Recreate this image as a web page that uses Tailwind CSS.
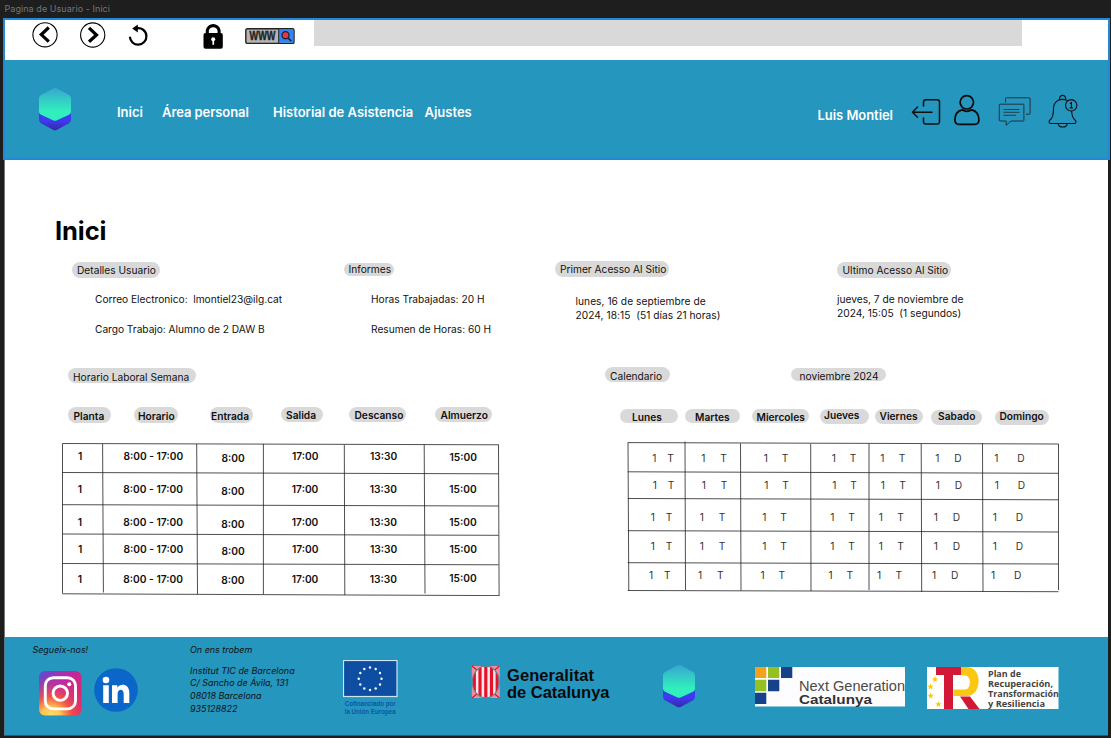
<!DOCTYPE html>
<html lang="es">
<head>
<meta charset="utf-8">
<title>Pagina de Usuario - Inici</title>
<script src="https://cdn.jsdelivr.net/npm/@tailwindcss/browser@4"></script>
</head>
<body class="flex h-[738px] w-[1111px] flex-col overflow-hidden bg-[#1e1e1e] font-['Inter',sans-serif] text-[10.2px] whitespace-nowrap text-[#111]">

<div class="h-[18px] shrink-0 pl-[4.500px] text-[9px] leading-[18px] tracking-[0.060px] text-[#757575]">Pagina de Usuario - Inici</div>

<header class="ml-[3px] flex h-[142px] w-[1107px] shrink-0 flex-col border-2 border-[#2388d6] bg-[#2596be]">
  <!-- browser bar -->
  <div class="flex h-[40px] shrink-0 items-start bg-white">
    <svg class="ml-[27px] mt-[2px] h-[26px] w-[26px]" viewBox="0 0 26 26" fill="none" stroke="#000"><circle cx="13" cy="12.8" r="12.1" stroke-width="1.1"/><path d="M16.8 5.5 9.3 12.6l7.5 7" stroke-width="3.2"/></svg>
    <svg class="ml-[22px] mt-[2px] h-[26px] w-[26px]" viewBox="0 0 26 26" fill="none" stroke="#000"><circle cx="12.7" cy="13" r="12.1" stroke-width="1.1"/><path d="m9 5.8 7.5 7.2L9 19.8" stroke-width="3.2"/></svg>
    <svg class="ml-[22px] mt-[4px] h-[24px] w-[20px]" viewBox="0 0 20 24" fill="none" stroke="#000"><path d="M7.500 4.600C13.500 3 18.400 6.700 18.400 12.200a8.200 8.200 0 0 1-16.500.5" stroke-width="2.200"/><path d="M9.800.6 4.200 4.600l5.600 4z" fill="#000" stroke="none"/></svg>
    <svg class="ml-[55px] mt-[3px] h-[26px] w-[20px]" viewBox="0 0 20 26"><path d="M4.300 13V7.500a6 6 0 0 1 11.800 0V13" fill="none" stroke="#000" stroke-width="3.100"/><rect x=".5" y="10" width="19.300" height="15.700" rx="2" fill="#000"/><circle cx="10.200" cy="16.200" r="2" fill="#fff"/><path d="M9.400 17h1.700v4.800H9.400z" fill="#fff"/></svg>
    <svg class="ml-[22px] mt-[8px] h-[16px] w-[50px]" viewBox="0 0 50 16"><rect x=".8" y=".8" width="48.200" height="14.600" rx="1.500" fill="#b4b4b4" stroke="#222" stroke-width="1.400"/><path d="M34 1.500h14.300v13.200H34z" fill="#2f86f6"/><path d="M33.700 1v14" stroke="#222"/><text x="4.500" y="12.300" font-family="Liberation Sans" font-weight="bold" font-size="12" textLength="26" lengthAdjust="spacingAndGlyphs" fill="#222" stroke="#222" stroke-width=".4">WWW</text><path d="m42.500 9.500 3.800 3.600" stroke="#222" stroke-width="1.700"/><circle cx="40.500" cy="7.200" r="3.500" fill="#ef3150" stroke="#222" stroke-width="1.300"/></svg>
    <div class="ml-[18.500px] h-[26px] w-[708.500px] bg-[#d9d9d9]"></div>
  </div>
  <!-- main navigation -->
  <nav class="flex grow items-start text-[13px] leading-[20px] font-semibold text-white">
    <svg class="ml-[34px] mt-[28px] h-[43px] w-[32px] shrink-0" viewBox="0 0 32 43"><defs><linearGradient id="hexTop" x2="0" y2="1"><stop stop-color="#37a6d0"/><stop offset=".7" stop-color="#30efbd"/></linearGradient><linearGradient id="hexBase" x2="0" y2="1"><stop offset=".6" stop-color="#3d3bf0"/><stop offset="1" stop-color="#3728a8"/></linearGradient></defs><path d="M0 18h32v14q0 2-2 3.200l-12 6.500q-2 1-4 0L2 35.200Q0 34 0 32z" fill="url(#hexBase)"/><path d="M14 .6q2-1 4 0L30 7q2 1.200 2 3.200V24q0 1.500-2 2.700l-12 5.600q-2 1-4 0L2 26.700Q0 25.500 0 24V10.200Q0 8.200 2 7z" fill="url(#hexTop)"/></svg>
    <div class="mt-[42px] grid w-[742px] shrink-0 grid-cols-[45px_111px_151.500px_1fr] pl-[46px]"><a>Inici</a><a class="tracking-[-0.070px]">Área personal</a><a>Historial de Asistencia</a><a>Ajustes</a></div>
    <a class="mt-[45px] ml-[4.500px] w-[93.500px] shrink-0 tracking-[-0.050px]">Luis Montiel</a>
    <svg class="mt-[38px] h-[28px] w-[30px]" viewBox="0 0 30 28" fill="none" stroke="#111" stroke-width="1.500" stroke-linecap="round" stroke-linejoin="round"><path d="M12.500 8V4q0-2.300 2.300-2.300h11.400q2.300 0 2.300 2.300v19.800q0 2.300-2.300 2.300H14.800q-2.300 0-2.300-2.300V20M21 14.300H1.800M6.500 9 1.500 14.300l5 5"/></svg>
    <svg class="ml-[13px] mt-[34px] h-[32px] w-[26px]" viewBox="0 0 26 32" fill="none" stroke="#0b0b0b" stroke-width="1.700"><circle cx="12.800" cy="8.300" r="6.700"/><path d="M8 15.800C3 17 1 20.500.9 26q0 4.300 4 4.300h16q4 0 4-4.300c-.1-5.500-2.100-9-7.100-10.200-3.500 2.200-6.500 2.200-9.800 0Z"/></svg>
    <svg class="ml-[18px] mt-[37px] h-[30px] w-[34px]" viewBox="0 0 34 30" fill="none" stroke="#263238" stroke-width="1"><path d="M7.500 5.500v-4q0-.7.700-.7h23.200q.7 0 .7.700v15q0 .7-.7.700H28M1.700 7.200h23.600q.6 0 .6.600v15.500q0 .7-.7.700H13L8.200 28.300V24H2q-.7 0-.7-.7V8q0-.8.400-.8Z"/><path d="M5.500 12.500h16M5.500 15.300h16M5.500 18.300h12.300" stroke-width=".9"/></svg>
    <svg class="ml-[16px] mt-[34px] h-[34px] w-[30px]" viewBox="0 0 30 34" fill="none" stroke="#111" stroke-width="1.100"><path d="M19.800 6.600C9 2.500 5.500 10 5.500 14.500c0 7-.8 9.500-3.500 11.500-1.500 1.300-1 3.500.5 3.500h24c1.700 0 2-2.200.5-3.500-2.300-2-3.200-5-3.400-9"/><path d="M11.500 5.500c-.3-5.500 6.500-5.500 6.200-.2M10.200 29.800c.6 4.300 8.400 4.300 9 0"/><circle cx="23.200" cy="11.300" r="5.700"/><path d="m21.900 9.800 1.500-1.200v5.200m-1.700.1h3.300"/></svg>
  </nav>
</header>

<main class="ml-[4px] flex h-[477px] w-[1104px] shrink-0 flex-col border-l border-[#777] bg-white">
  <h1 class="mt-[54px] ml-[50px] h-[32px] shrink-0 text-[25.500px] leading-[33px] font-bold tracking-[-0.100px] text-black">Inici</h1>

  <section class="h-[121px] shrink-0 pt-[15px]">
    <div class="flex h-[17px] items-start">
      <span class="ml-[67px] mt-[1px] h-[15.500px] w-[88px] rounded-full bg-[#d9d9d9] pl-[5px] leading-[17px]">Detalles Usuario</span>
      <span class="ml-[184px] mt-[1.500px] h-[13.500px] w-[50px] rounded-full bg-[#d9d9d9] pl-[4.500px] leading-[13px]">Informes</span>
      <span class="ml-[161px] h-[16px] w-[114px] rounded-full bg-[#d9d9d9] pl-[5px] leading-[17px]">Primer Acesso Al Sitio</span>
      <span class="ml-[168px] mt-[1px] h-[15.500px] w-[114px] rounded-full bg-[#d9d9d9] pl-[5.500px] leading-[17px]">Ultimo Acesso Al Sitio</span>
    </div>
    <div class="mt-[13.500px] ml-[90px] grid grid-cols-[276px_204.500px_261.500px_1fr] leading-[14px]">
      <div><p class="tracking-[-0.020px]">Correo Electronico:&nbsp; lmontiel23@ilg.cat</p><p class="mt-[16.500px] tracking-[-0.030px]">Cargo Trabajo: Alumno de 2 DAW B</p></div>
      <div><p>Horas Trabajadas: 20 H</p><p class="mt-[16.500px]">Resumen de Horas: 60 H</p></div>
      <p class="pt-[2px] tracking-[0.040px]">lunes, 16 de septiembre de<br>2024, 18:15&nbsp; (51 días 21 horas)</p>
      <p>jueves, 7 de noviembre de<br>2024, 15:05&nbsp; (1 segundos)</p>
    </div>
  </section>

  <section class="flex items-start">
    <!-- weekly schedule -->
    <div class="w-[600px] shrink-0">
      <h2 class="ml-[63px] mt-[0.500px] h-[15.500px] w-[128px] rounded-full bg-[#d9d9d9] pl-[5px] leading-[18.500px]">Horario Laboral Semana</h2>
      <div class="mt-[24px] flex h-[15.500px] items-start pl-[63px] font-semibold">
        <span class="h-[15.500px] w-[43px] rounded-full bg-[#d9d9d9] pl-[5.500px] leading-[18px]">Planta</span>
        <span class="ml-[22.500px] h-[15.500px] w-[44px] rounded-full bg-[#d9d9d9] pl-[4.500px] leading-[18px]">Horario</span>
        <span class="ml-[32.500px] h-[15.500px] w-[42.500px] rounded-full bg-[#d9d9d9] pl-[1px] leading-[19px]">Entrada</span>
        <span class="ml-[28.500px] h-[15px] w-[42px] rounded-full bg-[#d9d9d9] pl-[5px] leading-[16px]">Salida</span>
        <span class="ml-[26px] h-[15px] w-[57px] rounded-full bg-[#d9d9d9] pl-[5.500px] leading-[16px]">Descanso</span>
        <span class="ml-[29px] h-[15px] w-[57px] rounded-full bg-[#d9d9d9] pl-[5.500px] leading-[16px]">Almuerzo</span>
      </div>
      <div class="relative mt-[20.500px] ml-[57px] h-[153px] w-[438px] leading-[14px] font-semibold">
        <svg class="absolute inset-0 h-[153px] w-[438px]" viewBox="0 0 438 153" fill="none" stroke="#222" stroke-width=".8"><path d="M.5.500 436.500 1.800M.5 29.500l436 1.300M.5 61.700l436 1.300M.5 91l436 1.300M.5 120.500l436 1.300M.5 150.800l437 1.800M.5.500v150M40.600 1l.8 148.500M134.700 1l.8 150M201.400 1v150.500M282.300 2l.5 150M362.200 1.500l.8 149M436.500 1.500l.6 151"/></svg>
        <div class="grid h-[29.500px] grid-cols-[45.500px_98px_70.500px_78px_79.500px_1fr] pt-[6px] pl-[16px]"><span>1</span><span>8:00 - 17:00</span><span class="pt-[1.500px]">8:00</span><span>17:00</span><span>13:30</span><span class="pt-[0.500px]">15:00</span></div>
        <div class="grid h-[32px] grid-cols-[45.500px_98px_70.500px_78px_79.500px_1fr] pt-[9.500px] pl-[15.800px]"><span>1</span><span>8:00 - 17:00</span><span class="pt-[1.500px]">8:00</span><span>17:00</span><span>13:30</span><span>15:00</span></div>
        <div class="grid h-[29.500px] grid-cols-[45.500px_98px_70.500px_78px_79.500px_1fr] pt-[10.500px] pl-[15.800px]"><span>1</span><span>8:00 - 17:00</span><span class="pt-[1.500px]">8:00</span><span>17:00</span><span>13:30</span><span>15:00</span></div>
        <div class="grid h-[29.500px] grid-cols-[45.500px_98px_70.500px_78px_79.500px_1fr] pt-[8px] pl-[16px]"><span>1</span><span>8:00 - 17:00</span><span class="pt-[1.500px]">8:00</span><span>17:00</span><span>13:30</span><span>15:00</span></div>
        <div class="grid h-[30px] grid-cols-[45.500px_98px_70.500px_78px_79.500px_1fr] pt-[8.500px] pl-[15.800px]"><span>1</span><span>8:00 - 17:00</span><span class="pt-[0.500px]">8:00</span><span>17:00</span><span>13:30</span><span class="mt-[-1px]">15:00</span></div>
      </div>
    </div>
    <!-- calendar -->
    <div class="grow">
      <div class="flex h-[15px] items-start">
        <h2 class="h-[15px] w-[64.500px] rounded-full bg-[#d9d9d9] pl-[5px] leading-[18px]">Calendario</h2>
        <span class="mt-[1px] ml-[121.500px] h-[13px] w-[95px] rounded-full bg-[#d9d9d9] pl-[8.500px] leading-[16px]">noviembre 2024</span>
      </div>
      <div class="mt-[26px] flex h-[17px] items-start pl-[15px] font-semibold">
        <span class="mt-[0.500px] h-[14.500px] w-[57.500px] rounded-full bg-[#d9d9d9] pl-[12px] leading-[17px]">Lunes</span>
        <span class="ml-[7.500px] mt-[0.500px] h-[14.500px] w-[54.500px] rounded-full bg-[#d9d9d9] pl-[10px] leading-[16px]">Martes</span>
        <span class="ml-[12px] mt-[0.500px] h-[14.500px] w-[57.500px] rounded-full bg-[#d9d9d9] pl-[5px] leading-[17px]">Miercoles</span>
        <span class="ml-[11px] mt-[0.500px] h-[15px] w-[48.500px] rounded-full bg-[#d9d9d9] pl-[4px] leading-[13px]">Jueves</span>
        <span class="ml-[6.500px] mt-[1px] h-[15px] w-[47.500px] rounded-full bg-[#d9d9d9] pl-[4.500px] leading-[14px]">Viernes</span>
        <span class="ml-[8px] mt-[2px] h-[14.500px] w-[51.500px] rounded-full bg-[#d9d9d9] pl-[7.500px] leading-[13px]">Sabado</span>
        <span class="ml-[12.500px] mt-[2px] h-[15px] w-[54px] rounded-full bg-[#d9d9d9] pl-[5px] leading-[13px]">Domingo</span>
      </div>
      <div class="relative mt-[17px] ml-[22px] h-[150px] w-[433px] leading-[14px] text-[#333]">
        <svg class="absolute inset-0 h-[150px] w-[433px] overflow-visible" viewBox="0 0 433 150" fill="none" stroke="#222" stroke-width=".8"><path d="M.8.600 431.500 2M.8 29.800l430.700 1.500M.8 56.500l430.700 1.300M.8 88.700l430.700 1.300M.8 120.700l430.700 1.300M.8 148.500l430.700 1.200M1 .600l.8 148M58-.5l.5 148.500M113.500 1.500l.5 147M183.700 2l.3 147M242 1.500V148M294.200 2l.5 148M355.500 1l.5 148.500M431.500 2v146"/></svg>
        <div class="grid h-[29.500px] grid-cols-[15px_34px_19px_43.500px_18px_50px_18px_30.500px_18.500px_36.500px_19px_40px_23px_1fr] pt-[8.500px] pl-[25.300px]"><span>1</span><span>T</span><span>1</span><span>T</span><span>1</span><span>T</span><span>1</span><span>T</span><span>1</span><span>T</span><span>1</span><span>D</span><span>1</span><span>D</span></div>
        <div class="grid h-[26.500px] grid-cols-[15px_34px_19px_43.500px_18px_50px_18px_30.500px_18.500px_36.500px_19px_40px_23px_1fr] pt-[6.500px] pl-[25.800px]"><span>1</span><span>T</span><span>1</span><span>T</span><span>1</span><span>T</span><span>1</span><span>T</span><span>1</span><span>T</span><span>1</span><span>D</span><span>1</span><span>D</span></div>
        <div class="grid h-[32px] grid-cols-[15px_34px_19px_43.500px_18px_50px_18px_30.500px_18.500px_36.500px_19px_40px_23px_1fr] pt-[11.500px] pl-[23.800px]"><span>1</span><span>T</span><span>1</span><span>T</span><span>1</span><span>T</span><span>1</span><span>T</span><span>1</span><span>T</span><span>1</span><span>D</span><span>1</span><span>D</span></div>
        <div class="grid h-[32px] grid-cols-[15px_34px_19px_43.500px_18px_50px_18px_30.500px_18.500px_36.500px_19px_40px_23px_1fr] pt-[9px] pl-[23.800px]"><span>1</span><span>T</span><span>1</span><span>T</span><span>1</span><span>T</span><span>1</span><span>T</span><span>1</span><span>T</span><span>1</span><span>D</span><span>1</span><span>D</span></div>
        <div class="grid h-[29px] grid-cols-[15px_34px_19px_43.500px_18px_50px_18px_30.500px_18.500px_36.500px_19px_40px_23px_1fr] pt-[6px] pl-[22px]"><span>1</span><span>T</span><span>1</span><span>T</span><span>1</span><span>T</span><span>1</span><span>T</span><span>1</span><span>T</span><span>1</span><span>D</span><span>1</span><span>D</span></div>
      </div>
    </div>
  </section>
</main>

<footer class="ml-[4px] flex h-[99px] w-[1104px] shrink-0 items-start border-b border-l border-b-[#1b5f78] border-l-[#4d7f92] bg-[#2596be] text-[8.950px] leading-[12.670px] italic">
  <div class="ml-[27.500px] mt-[7px] w-[157.500px] shrink-0">
    <p>Segueix-nos!</p>
    <div class="mt-[11px] flex items-start gap-[12px] pl-[6.500px]">
      <svg class="mt-[3px] h-[45px] w-[43px]" viewBox="0 0 43 45"><defs><linearGradient id="igBase" x1="0" y1="0" x2="1" y2=".6"><stop stop-color="#5450d6"/><stop offset=".45" stop-color="#b02bb0"/><stop offset="1" stop-color="#e2266a"/></linearGradient><radialGradient id="igGlow" cx=".28" cy="1.050" r=".95"><stop stop-color="#ffdf74"/><stop offset=".25" stop-color="#ffc650"/><stop offset=".5" stop-color="#f9593c" stop-opacity=".9"/><stop offset="1" stop-color="#d32b84" stop-opacity="0"/></radialGradient></defs><rect width="42.500" height="44.500" rx="6" fill="url(#igBase)"/><rect width="42.500" height="44.500" rx="6" fill="url(#igGlow)"/><g fill="none" stroke="#fff" stroke-width="2.900"><rect x="6.300" y="6.700" width="30.200" height="31.200" rx="8"/><circle cx="21.300" cy="22.200" r="7.200"/></g><circle cx="30.300" cy="13.300" r="2" fill="#fff"/></svg>
      <svg class="h-[44px] w-[44px]" viewBox="0 0 44 44"><circle cx="22" cy="22" r="21.800" fill="#0a66c8"/><g fill="#fff"><circle cx="12" cy="12" r="3.300"/><path d="M9.200 17.200h5.600V35H9.200zM18 17.200h5.300v2.500c2.500-4.500 12-4.300 12 5V35h-5.600v-9.200c0-5.500-6.100-5-6.100 0V35H18z"/></g></svg>
    </div>
  </div>
  <div class="mt-[7px] w-[153px] shrink-0">
    <p>On ens trobem</p>
    <p class="mt-[8px]">Institut TIC de Barcelona<br>C/ Sancho de Ávila, 131<br>08018 Barcelona<br>935128822</p>
  </div>
  <svg class="mt-[23px] h-[56px] w-[55px] shrink-0 not-italic" viewBox="0 0 55 56"><rect x=".5" y=".5" width="53.500" height="36" fill="#0d4da2" stroke="#cfe6f2" stroke-width="1.200"/><g fill="#fff"><circle cx="27" cy="7.500" r="1.200"/><circle cx="32.700" cy="9" r="1.200"/><circle cx="37" cy="13" r="1.200"/><circle cx="38.500" cy="18.700" r="1.200"/><circle cx="37" cy="24.500" r="1.200"/><circle cx="32.700" cy="28.500" r="1.200"/><circle cx="27" cy="30" r="1.200"/><circle cx="21.300" cy="28.500" r="1.200"/><circle cx="17.300" cy="24.500" r="1.200"/><circle cx="15.700" cy="18.700" r="1.200"/><circle cx="17.300" cy="13" r="1.200"/><circle cx="21.300" cy="9" r="1.200"/></g><g font-family="Liberation Sans" font-weight="bold" font-size="6.300" fill="#0d57a8"><text x="1.700" y="46" textLength="51" lengthAdjust="spacingAndGlyphs">Cofinanciado por</text><text x="1.700" y="53.500" textLength="51" lengthAdjust="spacingAndGlyphs">la Unión Europea</text></g></svg>
  <svg class="mt-[28px] ml-[73px] h-[40px] w-[140px] shrink-0 not-italic" viewBox="0 0 140 40"><rect x=".8" y="1" width="28" height="32" fill="#ec8f9d"/><path d="m1 1 6 5M28.500 1l-6 5M1 33l6-5M28.500 33l-6-5" stroke="#e3132b" stroke-width="1.200"/><clipPath id="seal"><ellipse cx="14.800" cy="17" rx="13.500" ry="16"/></clipPath><g clip-path="url(#seal)"><path d="M0 0h30v34H0z" fill="#fbe9ec"/><path d="M3.300 0v34M9 0v34M14.800 0v34M20.500 0v34M26.200 0v34" stroke="#e3132b" stroke-width="3.200"/></g><ellipse cx="14.800" cy="17" rx="13.500" ry="15.800" fill="none" stroke="#6b7f98" stroke-width="1.200"/><g font-family="Liberation Sans" font-weight="bold" font-size="16.500" fill="#0a0a0a"><text x="36" y="16" textLength="87">Generalitat</text><text x="36" y="32.700" textLength="102.500">de Catalunya</text></g></svg>
  <svg class="mt-[28px] ml-[52px] h-[43px] w-[32px] shrink-0" viewBox="0 0 32 43"><path d="M0 18h32v14q0 2-2 3.200l-12 6.500q-2 1-4 0L2 35.200Q0 34 0 32z" fill="url(#hexBase)"/><path d="M14 .6q2-1 4 0L30 7q2 1.200 2 3.200V24q0 1.500-2 2.700l-12 5.600q-2 1-4 0L2 26.700Q0 25.500 0 24V10.200Q0 8.200 2 7z" fill="url(#hexTop)"/></svg>
  <svg class="mt-[30px] ml-[60px] h-[40px] w-[151px] shrink-0 not-italic" viewBox="0 0 151 40"><path d="M0 0h150v39.500H0z" fill="#fdfdff"/><path d="M0 0h11.300v11H0z" fill="#f6a11c"/><path d="M13 0h11.300v11H13zM0 12.700h11.300v11.500H0z" fill="#94c11f"/><path d="M26 0h11.300v11H26zM13 12.700h11.300v11.500H13zM0 25.700h11.300V37H0z" fill="#164289"/><g font-family="Liberation Sans" fill="#333"><text x="44" y="23.500" font-size="14.800" fill="#4a4a4a" textLength="106" lengthAdjust="spacingAndGlyphs">Next Generation</text><text x="44" y="36.700" font-size="13.500" font-weight="bold" textLength="73" lengthAdjust="spacingAndGlyphs">Catalunya</text></g></svg>
  <svg class="mt-[30px] ml-[21px] h-[42px] w-[132px] shrink-0 not-italic" viewBox="0 0 132 42"><path d="M0 0h131.500v42H0z" fill="#fff"/><path d="M34 0h6c16 0 15 29 0 29H26.500v-6.500H38c6.500 0 6.500-14 0-14h-4z" fill="#fbc713"/><path d="M9 0h25v8H26v34h-9V8H9zM33 29.500h10L52.500 42h-11z" fill="#d31736"/><g fill="#fbc713"><path id="star" d="m8 9 .9 2.200 2.300.1-1.800 1.500.6 2.300L8 13.800l-2 1.300.6-2.300-1.800-1.500 2.300-.1z"/><use href="#star" x="-4.500" y="7.500"/><use href="#star" x="-4.300" y="16.500"/><use href="#star" x="3.500" y="25"/></g><g font-family="Open Sans" font-weight="bold" font-size="8" fill="#444"><text x="61" y="9.800" textLength="33" lengthAdjust="spacingAndGlyphs">Plan de</text><text x="61" y="20" textLength="65" lengthAdjust="spacingAndGlyphs">Recuperación,</text><text x="61" y="30.200" textLength="71" lengthAdjust="spacingAndGlyphs">Transformación</text><text x="61" y="40.300" textLength="57" lengthAdjust="spacingAndGlyphs">y Resiliencia</text></g></svg>
</footer>
</body>
</html>
